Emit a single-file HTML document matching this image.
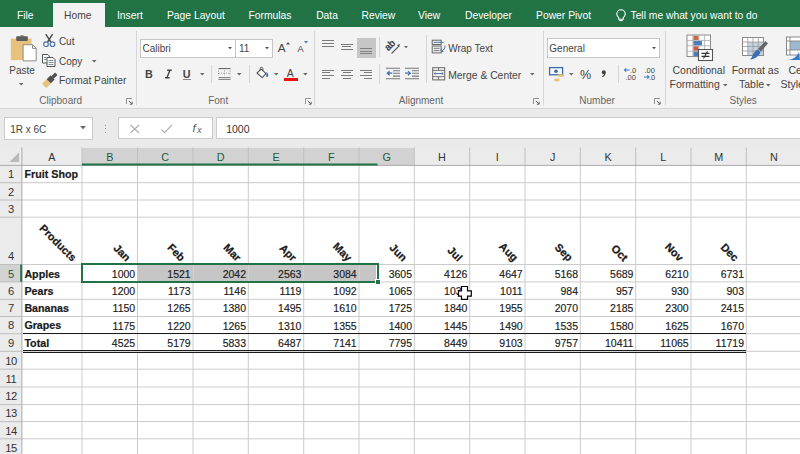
<!DOCTYPE html>
<html><head><meta charset="utf-8"><style>
html,body{margin:0;padding:0;}
body{width:800px;height:454px;overflow:hidden;position:relative;background:#fff;font-family:"Liberation Sans",sans-serif;}
.t{position:absolute;white-space:nowrap;}
.r{position:absolute;}
svg.r{overflow:visible;}
</style></head><body>
<div class="r" style="left:0px;top:0px;width:800px;height:27px;background:#217346;"></div>
<div class="r" style="left:53px;top:3px;width:51.5px;height:25px;background:#f3f3f3;"></div>
<div class="t" style="left:17.00px;top:10.58px;font-size:10.3px;line-height:10.3px;color:#ffffff;">File</div>
<div class="t" style="left:64.00px;top:10.58px;font-size:10.3px;line-height:10.3px;color:#444;">Home</div>
<div class="t" style="left:117.00px;top:10.58px;font-size:10.3px;line-height:10.3px;color:#ffffff;">Insert</div>
<div class="t" style="left:167.00px;top:10.58px;font-size:10.3px;line-height:10.3px;color:#ffffff;">Page Layout</div>
<div class="t" style="left:248.50px;top:10.58px;font-size:10.3px;line-height:10.3px;color:#ffffff;">Formulas</div>
<div class="t" style="left:316.20px;top:10.58px;font-size:10.3px;line-height:10.3px;color:#ffffff;">Data</div>
<div class="t" style="left:361.50px;top:10.58px;font-size:10.3px;line-height:10.3px;color:#ffffff;">Review</div>
<div class="t" style="left:418.10px;top:10.58px;font-size:10.3px;line-height:10.3px;color:#ffffff;">View</div>
<div class="t" style="left:465.00px;top:10.58px;font-size:10.3px;line-height:10.3px;color:#ffffff;">Developer</div>
<div class="t" style="left:536.10px;top:10.58px;font-size:10.3px;line-height:10.3px;color:#ffffff;">Power Pivot</div>
<div class="t" style="left:630.50px;top:10.58px;font-size:10.3px;line-height:10.3px;color:#ffffff;">Tell me what you want to do</div>
<svg class="r" style="left:614px;top:9px" width="14" height="14" viewBox="0 0 14 14"><path d="M4.7 8.6 C3.4 7.6 2.8 6.4 2.8 5 A4.2 4.2 0 0 1 11.2 5 C11.2 6.4 10.6 7.6 9.3 8.6 L9.3 10.2 L4.7 10.2 Z" fill="none" stroke="#fff" stroke-width="1.1"/><path d="M5.2 11.6 H8.8" stroke="#fff" stroke-width="1.1"/></svg>
<div class="r" style="left:0px;top:27px;width:800px;height:81px;background:#f3f3f3;"></div>
<div class="r" style="left:0px;top:108px;width:800px;height:1px;background:#d5d5d5;"></div>
<svg class="r" style="left:9px;top:33px" width="30" height="30" viewBox="0 0 30 30">
<rect x="1.8" y="5.6" width="20.8" height="21.5" fill="#e8c27c"/>
<rect x="7.2" y="3.3" width="11.6" height="4.6" rx="1" fill="#5d5d5d"/>
<path d="M10.5 3.5 Q13 1.2 15.5 3.5 Z" fill="#5d5d5d"/>
<path d="M14.1 11.7 H23.5 L27.2 15.4 V27.9 H14.1 Z" fill="#fff" stroke="#8a8a8a" stroke-width="1"/>
<path d="M23.5 11.7 V15.4 H27.2" fill="none" stroke="#8a8a8a" stroke-width="1"/>
</svg>
<div class="t" style="left:9.30px;top:65.83px;font-size:10.0px;line-height:10.0px;color:#444;">Paste</div>
<svg class="r" style="left:19.3px;top:83.3px" width="4.5" height="2.5"><path d="M0 0 H4.5 L2.25 2.5 Z" fill="#666"/></svg>
<svg class="r" style="left:42px;top:33px" width="15" height="15" viewBox="0 0 15 15">
<path d="M3.8 1.2 L8.8 9 M10.6 1.2 L5.6 9" stroke="#4a4a4a" stroke-width="1.4" fill="none"/>
<circle cx="4" cy="11.2" r="2.3" fill="none" stroke="#4f74a8" stroke-width="1.2"/>
<circle cx="10.5" cy="11.2" r="2.3" fill="none" stroke="#4f74a8" stroke-width="1.2"/>
</svg>
<div class="t" style="left:58.90px;top:36.83px;font-size:10.0px;line-height:10.0px;color:#444;">Cut</div>
<svg class="r" style="left:41px;top:53px" width="16" height="15" viewBox="0 0 16 15">
<path d="M1.5 1.5 H6.8 L8.3 3 V10 H1.5 Z" fill="#fafafa" stroke="#555" stroke-width="1"/>
<path d="M3 4.5 H5.5 M3 6.5 H5.5" stroke="#6a7f95" stroke-width="0.9"/>
<path d="M6 4.5 H12 L14 6.5 V13.5 H6 Z" fill="#fafafa" stroke="#555" stroke-width="1"/>
<path d="M7.6 7.5 H12.4 M7.6 9.5 H12.4 M7.6 11.5 H12.4" stroke="#6a7f95" stroke-width="0.9"/>
</svg>
<div class="t" style="left:59.00px;top:56.73px;font-size:10.0px;line-height:10.0px;color:#444;">Copy</div>
<svg class="r" style="left:91.8px;top:60px" width="4.5" height="2.5"><path d="M0 0 H4.5 L2.25 2.5 Z" fill="#666"/></svg>
<svg class="r" style="left:42px;top:72px" width="16" height="16" viewBox="0 0 16 16">
<path d="M4.32 15.92 L9.32 10.92 L5.08 6.68 L0.08 11.68 Z" fill="#e8c27c"/>
<path d="M8.85 11.25 L12.65 7.45 L8.55 3.35 L4.75 7.15 Z" fill="#4f4f4f"/>
<path d="M11.60 6.80 L15.50 2.90 L13.10 0.50 L9.20 4.40 Z" fill="#4f4f4f"/>
</svg>
<div class="t" style="left:59.00px;top:75.87px;font-size:10.2px;line-height:10.2px;color:#444;">Format Painter</div>
<div class="t" style="left:39.30px;top:96.33px;font-size:10.0px;line-height:10.0px;color:#666;">Clipboard</div>
<svg class="r" style="left:125.5px;top:98px" width="7" height="7" viewBox="0 0 7 7"><path d="M0.5 6 V0.5 H6" fill="none" stroke="#888" stroke-width="0.9"/><path d="M2.8 2.8 L6 6 M3.8 6.2 H6.2 V3.8" fill="none" stroke="#666" stroke-width="1"/></svg>
<div class="r" style="left:136px;top:31px;width:1px;height:74px;background:#d6d6d6;"></div>
<div class="r" style="left:140px;top:38.5px;width:96px;height:19px;background:#fff;box-sizing:border-box;border:1px solid #c6c6c6;"></div>
<div class="r" style="left:235px;top:38.5px;width:38px;height:19px;background:#fff;box-sizing:border-box;border:1px solid #c6c6c6;"></div>
<div class="t" style="left:142.50px;top:44.03px;font-size:10.0px;line-height:10.0px;color:#444;">Calibri</div>
<svg class="r" style="left:227.5px;top:46.8px" width="4" height="2.3"><path d="M0 0 H4 L2.0 2.3 Z" fill="#555"/></svg>
<div class="t" style="left:239.00px;top:44.03px;font-size:10.0px;line-height:10.0px;color:#444;">11</div>
<svg class="r" style="left:264.8px;top:46.8px" width="4" height="2.3"><path d="M0 0 H4 L2.0 2.3 Z" fill="#555"/></svg>
<div class="t" style="left:277.80px;top:42.71px;font-size:11.8px;line-height:11.8px;color:#444;">A</div>
<svg class="r" style="left:286.3px;top:41.5px" width="4" height="2.5"><path d="M0 2.5 H4 L2 0 Z" fill="#555"/></svg>
<div class="t" style="left:297.60px;top:44.91px;font-size:9.2px;line-height:9.2px;color:#444;">A</div>
<svg class="r" style="left:304.3px;top:40.8px" width="4" height="2.5"><path d="M0 0 H4 L2.0 2.5 Z" fill="#3a7bc8"/></svg>
<div class="t" style="left:145.00px;top:68.56px;font-size:10.8px;line-height:10.8px;color:#444;font-weight:bold;">B</div>
<svg class="r" style="left:164px;top:69px" width="9" height="10" viewBox="0 0 9 10"><path d="M3.2 1.2 H7.8 M1 8.7 H5.6 M5.9 1.2 L2.9 8.7" stroke="#444" stroke-width="1.4" fill="none"/></svg>
<div class="t" style="left:182.80px;top:68.56px;font-size:10.8px;line-height:10.8px;color:#444;font-weight:bold;">U</div>
<div class="r" style="left:183px;top:78.6px;width:8px;height:1.3px;background:#888;"></div>
<svg class="r" style="left:199.5px;top:73.2px" width="4.5" height="2.5"><path d="M0 0 H4.5 L2.25 2.5 Z" fill="#666"/></svg>
<div class="r" style="left:211px;top:65px;width:1px;height:18px;background:#d6d6d6;"></div>
<svg class="r" style="left:218px;top:67px" width="13" height="14" viewBox="0 0 13 14">
<rect x="0.5" y="1" width="12" height="1.1" fill="#666"/>
<path d="M0.5 3.5 V9 M6.5 3.5 V9 M12 3.5 V9" stroke="#888" stroke-width="1" stroke-dasharray="1 1.6" fill="none"/>
<path d="M0.5 6.2 H12.5" stroke="#999" stroke-width="0.9" stroke-dasharray="1.2 1.2" fill="none"/>
<rect x="0.5" y="10" width="12" height="1.1" fill="#888"/>
<rect x="0.5" y="11.9" width="12" height="1.1" fill="#888"/>
</svg>
<svg class="r" style="left:236.5px;top:73.2px" width="4.5" height="2.5"><path d="M0 0 H4.5 L2.25 2.5 Z" fill="#666"/></svg>
<div class="r" style="left:248.7px;top:65px;width:1px;height:18px;background:#d6d6d6;"></div>
<svg class="r" style="left:256px;top:66px" width="14" height="13" viewBox="0 0 14 13">
<path d="M1 7 L5.2 3.2 L10 7.6 L6.2 11.6 Z" fill="#fff" stroke="#555" stroke-width="1.1" stroke-linejoin="round"/>
<path d="M4.2 4.2 C3.6 1.6 5 0.8 6.2 1.4 C7.2 2 7.2 3.4 6.6 5" fill="none" stroke="#555" stroke-width="1"/>
<path d="M10.4 5.8 C11.8 7.2 12.8 9 12 10.6 C11.3 11.6 10 11 10.2 9.8 C10.3 8.6 10.6 7.2 10.4 5.8 Z" fill="#3a6fb0"/>
</svg>
<svg class="r" style="left:273.8px;top:73.2px" width="4.5" height="2.5"><path d="M0 0 H4.5 L2.25 2.5 Z" fill="#666"/></svg>
<div class="t" style="left:286.80px;top:67.81px;font-size:10.5px;line-height:10.5px;color:#444;">A</div>
<div class="r" style="left:283.8px;top:78px;width:14.2px;height:2.9px;background:#e81010;"></div>
<svg class="r" style="left:302.8px;top:73.2px" width="4.5" height="2.5"><path d="M0 0 H4.5 L2.25 2.5 Z" fill="#666"/></svg>
<div class="t" style="left:208.20px;top:96.33px;font-size:10.0px;line-height:10.0px;color:#666;">Font</div>
<svg class="r" style="left:304.5px;top:98px" width="7" height="7" viewBox="0 0 7 7"><path d="M0.5 6 V0.5 H6" fill="none" stroke="#888" stroke-width="0.9"/><path d="M2.8 2.8 L6 6 M3.8 6.2 H6.2 V3.8" fill="none" stroke="#666" stroke-width="1"/></svg>
<div class="r" style="left:314px;top:31px;width:1px;height:74px;background:#d6d6d6;"></div>
<div class="r" style="left:322.2px;top:40.15px;width:12.2px;height:1.1px;background:#7a7a7a;"></div>
<div class="r" style="left:322.2px;top:43.05px;width:12.2px;height:1.1px;background:#7a7a7a;"></div>
<div class="r" style="left:322.2px;top:45.95px;width:12.2px;height:1.1px;background:#7a7a7a;"></div>
<div class="r" style="left:340.8px;top:43.75px;width:12.2px;height:1.1px;background:#7a7a7a;"></div>
<div class="r" style="left:342.3px;top:46.35px;width:9.2px;height:1.1px;background:#7a7a7a;"></div>
<div class="r" style="left:340.8px;top:49.05px;width:12.2px;height:1.1px;background:#7a7a7a;"></div>
<div class="r" style="left:357px;top:38px;width:19px;height:19.5px;background:#c6c6c6;"></div>
<div class="r" style="left:360px;top:47.75px;width:12px;height:1.1px;background:#808080;"></div>
<div class="r" style="left:360px;top:50.65px;width:12px;height:1.1px;background:#808080;"></div>
<div class="r" style="left:360px;top:53.35px;width:12px;height:1.1px;background:#808080;"></div>
<div class="r" style="left:379px;top:37px;width:1px;height:20px;background:#d6d6d6;"></div>
<svg class="r" style="left:385px;top:40px" width="17" height="15" viewBox="0 0 17 15">
<text x="0" y="0" transform="translate(3.2,11.2) rotate(-45)" font-family="Liberation Sans" font-size="9.5" fill="#333" stroke="#333" stroke-width="0.35">ab</text>
<path d="M6.5 13.5 L14.2 5.8" stroke="#555" stroke-width="1.1"/>
<path d="M12 5 L15 4 L14 7 Z" fill="#555"/>
</svg>
<svg class="r" style="left:403.5px;top:46.2px" width="4" height="2.3"><path d="M0 0 H4 L2.0 2.3 Z" fill="#666"/></svg>
<div class="r" style="left:322px;top:69.55px;width:12px;height:1.1px;background:#7a7a7a;"></div>
<div class="r" style="left:322px;top:72.15px;width:8px;height:1.1px;background:#7a7a7a;"></div>
<div class="r" style="left:322px;top:75.05px;width:12px;height:1.1px;background:#7a7a7a;"></div>
<div class="r" style="left:322px;top:77.75px;width:8px;height:1.1px;background:#7a7a7a;"></div>
<div class="r" style="left:341px;top:69.55px;width:12px;height:1.1px;background:#7a7a7a;"></div>
<div class="r" style="left:343px;top:72.15px;width:8px;height:1.1px;background:#7a7a7a;"></div>
<div class="r" style="left:341px;top:75.05px;width:12px;height:1.1px;background:#7a7a7a;"></div>
<div class="r" style="left:343px;top:77.75px;width:8px;height:1.1px;background:#7a7a7a;"></div>
<div class="r" style="left:360px;top:69.55px;width:12px;height:1.1px;background:#7a7a7a;"></div>
<div class="r" style="left:364px;top:72.15px;width:8px;height:1.1px;background:#7a7a7a;"></div>
<div class="r" style="left:360px;top:75.05px;width:12px;height:1.1px;background:#7a7a7a;"></div>
<div class="r" style="left:364px;top:77.75px;width:8px;height:1.1px;background:#7a7a7a;"></div>
<div class="r" style="left:379px;top:64px;width:1px;height:20px;background:#d6d6d6;"></div>
<svg class="r" style="left:386px;top:67px" width="34" height="14" viewBox="0 0 34 14">
<path d="M0 1.2 H14 M7 3.8 H14 M7 6.2 H14 M7 9.1 H14 M0 11.8 H14" stroke="#777" stroke-width="1.1"/>
<path d="M0.3 6.2 L3.6 3.4 V9 Z M3 5.6 H6.3 V6.8 H3 Z" fill="#3a6fb0"/>
<path d="M19 1.2 H33 M26 3.8 H33 M26 6.2 H33 M26 9.1 H33 M19 11.8 H33" stroke="#777" stroke-width="1.1"/>
<path d="M25.2 6.2 L21.9 3.4 V9 Z M19 5.6 H22.5 V6.8 H19 Z" fill="#3a6fb0"/>
</svg>
<div class="r" style="left:425.9px;top:35px;width:1px;height:48px;background:#d6d6d6;"></div>
<svg class="r" style="left:431px;top:39px" width="16" height="16" viewBox="0 0 16 16">
<rect x="1.2" y="1.2" width="9" height="4.3" fill="none" stroke="#666" stroke-width="1"/>
<path d="M2.5 3.35 H12.5" stroke="#4f74a8" stroke-width="1"/>
<rect x="1.2" y="7" width="9" height="6.9" fill="none" stroke="#666" stroke-width="1"/>
<path d="M2.8 9.3 H8.5 M2.8 11.6 H8.5" stroke="#666" stroke-width="0.9"/>
<path d="M14 6.5 C14 9.5 13 11 10.5 12" fill="none" stroke="#4f74a8" stroke-width="1"/>
<path d="M10 9.8 L10 12.3 L12.5 12.6" fill="none" stroke="#4f74a8" stroke-width="1"/>
</svg>
<div class="t" style="left:448.20px;top:44.23px;font-size:10.0px;line-height:10.0px;color:#444;">Wrap Text</div>
<svg class="r" style="left:431px;top:66px" width="15" height="15" viewBox="0 0 15 15">
<rect x="1.7" y="1.7" width="12" height="12.2" fill="none" stroke="#666" stroke-width="1"/>
<path d="M1.7 4.4 H13.7 M1.7 10.7 H13.7 M7.6 1.7 V4.4 M7.6 10.7 V13.9" stroke="#666" stroke-width="0.9"/>
<path d="M3.3 7.55 H12.1" stroke="#4f74a8" stroke-width="1"/>
<path d="M4.6 6.3 L3.2 7.55 L4.6 8.8 M10.8 6.3 L12.2 7.55 L10.8 8.8" fill="none" stroke="#4f74a8" stroke-width="0.9"/>
</svg>
<div class="t" style="left:448.20px;top:70.84px;font-size:10.35px;line-height:10.35px;color:#444;">Merge &amp; Center</div>
<svg class="r" style="left:530.3px;top:73.2px" width="4.5" height="2.5"><path d="M0 0 H4.5 L2.25 2.5 Z" fill="#666"/></svg>
<div class="t" style="left:398.80px;top:96.33px;font-size:10.0px;line-height:10.0px;color:#666;">Alignment</div>
<svg class="r" style="left:532.5px;top:98px" width="7" height="7" viewBox="0 0 7 7"><path d="M0.5 6 V0.5 H6" fill="none" stroke="#888" stroke-width="0.9"/><path d="M2.8 2.8 L6 6 M3.8 6.2 H6.2 V3.8" fill="none" stroke="#666" stroke-width="1"/></svg>
<div class="r" style="left:542.6px;top:31px;width:1px;height:74px;background:#d6d6d6;"></div>
<div class="r" style="left:547.4px;top:38px;width:112.4px;height:19.6px;background:#fff;box-sizing:border-box;border:1px solid #c6c6c6;"></div>
<div class="t" style="left:549.30px;top:43.73px;font-size:10.0px;line-height:10.0px;color:#444;">General</div>
<svg class="r" style="left:651.7px;top:47px" width="4" height="2.3"><path d="M0 0 H4 L2.0 2.3 Z" fill="#555"/></svg>
<svg class="r" style="left:548px;top:66px" width="17" height="16" viewBox="0 0 17 16">
<rect x="1.6" y="1.6" width="13" height="7.2" fill="#f4f8fc" stroke="#3d69a8" stroke-width="1.3"/>
<circle cx="8" cy="5.2" r="1.8" fill="#3d69a8"/>
<ellipse cx="12.8" cy="9.6" rx="3.6" ry="1.3" fill="#e8c27c"/>
<ellipse cx="8.8" cy="14" rx="3" ry="1.4" fill="#e8c27c"/>
</svg>
<svg class="r" style="left:568.5px;top:73.2px" width="4.5" height="2.5"><path d="M0 0 H4.5 L2.25 2.5 Z" fill="#666"/></svg>
<div class="t" style="left:580.00px;top:68.63px;font-size:12.6px;line-height:12.6px;color:#444;">%</div>
<svg class="r" style="left:600px;top:69px" width="8" height="9" viewBox="0 0 8 9"><circle cx="3.8" cy="3.2" r="2" fill="#444"/><path d="M5.6 3.4 C5.6 5.6 4.4 7.4 2.4 8.2 L2 7.4 C3.3 6.6 4 5.6 4 4.2 Z" fill="#444"/></svg>
<div class="r" style="left:618.3px;top:65px;width:1px;height:18px;background:#d6d6d6;"></div>
<svg class="r" style="left:623px;top:66px" width="36" height="16" viewBox="0 0 36 16">
<text x="7" y="6.8" font-family="Liberation Sans" font-size="7.5" fill="#444">.0</text>
<text x="2.5" y="13.8" font-family="Liberation Sans" font-size="7.5" fill="#444">.00</text>
<path d="M1.5 4 H6.5 M3.2 2.3 L1.5 4 L3.2 5.7" fill="none" stroke="#3a7bc8" stroke-width="1.1"/>
<text x="21.5" y="6.8" font-family="Liberation Sans" font-size="7.5" fill="#444">.00</text>
<text x="26" y="13.8" font-family="Liberation Sans" font-size="7.5" fill="#444">.0</text>
<path d="M21 11 H26 M24.3 9.3 L26 11 L24.3 12.7" fill="none" stroke="#3a7bc8" stroke-width="1.1"/>
</svg>
<div class="t" style="left:579.30px;top:96.33px;font-size:10.0px;line-height:10.0px;color:#666;">Number</div>
<svg class="r" style="left:653.8px;top:98px" width="7" height="7" viewBox="0 0 7 7"><path d="M0.5 6 V0.5 H6" fill="none" stroke="#888" stroke-width="0.9"/><path d="M2.8 2.8 L6 6 M3.8 6.2 H6.2 V3.8" fill="none" stroke="#666" stroke-width="1"/></svg>
<div class="r" style="left:665.4px;top:31px;width:1px;height:74px;background:#d6d6d6;"></div>
<svg class="r" style="left:686px;top:34px" width="28" height="28" viewBox="0 0 28 28">
<rect x="1" y="1" width="23.5" height="21.5" fill="#fff" stroke="#8a8a8a" stroke-width="1"/>
<path d="M1 6.4 H24.5 M1 11.8 H24.5 M1 17.2 H24.5 M6.9 1 V22.5 M12.8 1 V22.5 M18.7 1 V22.5" stroke="#b0b0b0" stroke-width="0.9"/>
<rect x="7.4" y="1.8" width="5" height="4.2" fill="#c86a4a"/>
<rect x="7.4" y="7" width="8.5" height="4.3" fill="#4a7ebb"/>
<rect x="7.4" y="12.3" width="5" height="4.4" fill="#d0573e"/>
<rect x="7.4" y="17.6" width="5" height="4.4" fill="#4a7ebb"/>
<rect x="12.5" y="15.5" width="14" height="11" fill="#fff" stroke="#555" stroke-width="1.1"/>
<path d="M15.5 19.4 H23.5 M15.5 22.4 H23.5 M21.5 17.3 L17.5 24.5" stroke="#333" stroke-width="1.1" fill="none"/>
</svg>
<div class="t" style="left:672.50px;top:65.21px;font-size:10.5px;line-height:10.5px;color:#444;">Conditional</div>
<div class="t" style="left:669.60px;top:79.41px;font-size:10.5px;line-height:10.5px;color:#444;">Formatting</div>
<svg class="r" style="left:722.8px;top:83.5px" width="4.5" height="2.5"><path d="M0 0 H4.5 L2.25 2.5 Z" fill="#666"/></svg>
<svg class="r" style="left:742px;top:36px" width="28" height="26" viewBox="0 0 28 26">
<rect x="0.5" y="1.5" width="21" height="18" fill="#fff" stroke="#8a8a8a" stroke-width="1"/>
<rect x="6" y="6" width="15" height="13" fill="#c5d3e0"/>
<path d="M0.5 6 H21.5 M0.5 10.5 H21.5 M0.5 15 H21.5 M5.8 1.5 V19.5 M11 1.5 V19.5 M16.3 1.5 V19.5" stroke="#9a9a9a" stroke-width="0.8"/>
<path d="M23.5 5 L26 7.5 L19 15.5 L16 13 Z" fill="#666"/>
<path d="M15.5 13.5 L18.5 16 C17.5 20 13 23 8 23.5 L10 21 C11 18 12.5 15 15.5 13.5 Z" fill="#3a6fb0"/>
</svg>
<div class="t" style="left:731.70px;top:65.21px;font-size:10.5px;line-height:10.5px;color:#444;">Format as</div>
<div class="t" style="left:739.00px;top:79.41px;font-size:10.5px;line-height:10.5px;color:#444;">Table</div>
<svg class="r" style="left:765.6px;top:83.5px" width="4.5" height="2.5"><path d="M0 0 H4.5 L2.25 2.5 Z" fill="#666"/></svg>
<svg class="r" style="left:786px;top:36px" width="20" height="26" viewBox="0 0 20 26">
<rect x="0.5" y="1" width="20" height="18" fill="#fff" stroke="#888" stroke-width="1"/>
<rect x="4" y="5" width="16" height="9" fill="#9fb7d0"/>
<path d="M0.5 5 H20 M0.5 14 H20 M4 1 V19" stroke="#888" stroke-width="0.9"/>
<path d="M13 16 C11 21 6 24 1 24 L14 24 Z" fill="#3a7bc8"/>
</svg>
<div class="t" style="left:788.50px;top:65.21px;font-size:10.5px;line-height:10.5px;color:#444;">Ce</div>
<div class="t" style="left:780.60px;top:79.41px;font-size:10.5px;line-height:10.5px;color:#444;">Style</div>
<div class="t" style="left:729.50px;top:96.33px;font-size:10.0px;line-height:10.0px;color:#666;">Styles</div>
<div class="r" style="left:0px;top:109px;width:800px;height:39px;background:#eaeaea;"></div>
<div class="r" style="left:4px;top:117px;width:88.5px;height:22.5px;background:#fff;box-sizing:border-box;border:1px solid #cdcdcd;"></div>
<div class="t" style="left:10.20px;top:124.94px;font-size:10.0px;line-height:10.0px;color:#444;">1R x 6C</div>
<svg class="r" style="left:80px;top:125.8px" width="6" height="3.2"><path d="M0 0 H6 L3.0 3.2 Z" fill="#666"/></svg>
<div class="r" style="left:105px;top:124.5px;width:1.2px;height:1.2px;background:#999;"></div>
<div class="r" style="left:105px;top:128px;width:1.2px;height:1.2px;background:#999;"></div>
<div class="r" style="left:105px;top:131.5px;width:1.2px;height:1.2px;background:#999;"></div>
<div class="r" style="left:118.4px;top:117px;width:94.3px;height:22.2px;background:#fff;box-sizing:border-box;border:1px solid #cdcdcd;"></div>
<svg class="r" style="left:129px;top:124px" width="45" height="10" viewBox="0 0 45 10">
<path d="M1.5 1 L10 9 M10 1 L1.5 9" stroke="#b0b0b0" stroke-width="1.1"/>
<path d="M32.5 5.5 L35.5 8.6 L43 1" fill="none" stroke="#b0b0b0" stroke-width="1.2"/>
</svg>
<div class="t" style="left:192.50px;top:122.87px;font-size:11.5px;line-height:11.5px;color:#555;font-family:"Liberation Serif";"><i>f</i></div>
<div class="t" style="left:197.20px;top:126.20px;font-size:8.5px;line-height:8.5px;color:#555;font-family:"Liberation Serif";"><i>x</i></div>
<div class="r" style="left:216.4px;top:117px;width:600px;height:22.2px;background:#fff;box-sizing:border-box;border:1px solid #cdcdcd;"></div>
<div class="t" style="left:226.20px;top:123.81px;font-size:10.5px;line-height:10.5px;color:#333;">1000</div>
<div class="r" style="left:0px;top:147.5px;width:800px;height:17.900000000000006px;background:#ebebeb;"></div>
<div class="r" style="left:0px;top:165.4px;width:21.9px;height:288.6px;background:#ebebeb;"></div>
<div class="r" style="left:82px;top:147.5px;width:332.3px;height:17.900000000000006px;background:#d2d2d2;"></div>
<div class="r" style="left:0px;top:264.5px;width:21.9px;height:17.399999999999977px;background:#d2d2d2;"></div>
<svg class="r" style="left:9px;top:151.5px" width="11" height="11"><path d="M10 0.5 V10 H0.5 Z" fill="#b9b9b9"/></svg>
<svg class="r" style="left:0;top:0" width="800" height="454"><line x1="82" y1="165.4" x2="82" y2="454" stroke="#cbcbcb" stroke-width="1"/><line x1="137.5" y1="165.4" x2="137.5" y2="454" stroke="#cbcbcb" stroke-width="1"/><line x1="193" y1="165.4" x2="193" y2="454" stroke="#cbcbcb" stroke-width="1"/><line x1="248.3" y1="165.4" x2="248.3" y2="454" stroke="#cbcbcb" stroke-width="1"/><line x1="303.7" y1="165.4" x2="303.7" y2="454" stroke="#cbcbcb" stroke-width="1"/><line x1="359" y1="165.4" x2="359" y2="454" stroke="#cbcbcb" stroke-width="1"/><line x1="414.3" y1="165.4" x2="414.3" y2="454" stroke="#cbcbcb" stroke-width="1"/><line x1="469.7" y1="165.4" x2="469.7" y2="454" stroke="#cbcbcb" stroke-width="1"/><line x1="525" y1="165.4" x2="525" y2="454" stroke="#cbcbcb" stroke-width="1"/><line x1="580.3" y1="165.4" x2="580.3" y2="454" stroke="#cbcbcb" stroke-width="1"/><line x1="635.7" y1="165.4" x2="635.7" y2="454" stroke="#cbcbcb" stroke-width="1"/><line x1="691" y1="165.4" x2="691" y2="454" stroke="#cbcbcb" stroke-width="1"/><line x1="746.3" y1="165.4" x2="746.3" y2="454" stroke="#cbcbcb" stroke-width="1"/><line x1="801.6" y1="165.4" x2="801.6" y2="454" stroke="#cbcbcb" stroke-width="1"/><line x1="21.9" y1="182.7" x2="800" y2="182.7" stroke="#cbcbcb" stroke-width="1"/><line x1="21.9" y1="200" x2="800" y2="200" stroke="#cbcbcb" stroke-width="1"/><line x1="21.9" y1="217.2" x2="800" y2="217.2" stroke="#cbcbcb" stroke-width="1"/><line x1="21.9" y1="264.5" x2="800" y2="264.5" stroke="#cbcbcb" stroke-width="1"/><line x1="21.9" y1="281.9" x2="800" y2="281.9" stroke="#cbcbcb" stroke-width="1"/><line x1="21.9" y1="299.3" x2="800" y2="299.3" stroke="#cbcbcb" stroke-width="1"/><line x1="21.9" y1="316.5" x2="800" y2="316.5" stroke="#cbcbcb" stroke-width="1"/><line x1="21.9" y1="333.7" x2="800" y2="333.7" stroke="#cbcbcb" stroke-width="1"/><line x1="21.9" y1="351.3" x2="800" y2="351.3" stroke="#cbcbcb" stroke-width="1"/><line x1="21.9" y1="369.2" x2="800" y2="369.2" stroke="#cbcbcb" stroke-width="1"/><line x1="21.9" y1="387.0" x2="800" y2="387.0" stroke="#cbcbcb" stroke-width="1"/><line x1="21.9" y1="404.6" x2="800" y2="404.6" stroke="#cbcbcb" stroke-width="1"/><line x1="21.9" y1="421.6" x2="800" y2="421.6" stroke="#cbcbcb" stroke-width="1"/><line x1="21.9" y1="438.8" x2="800" y2="438.8" stroke="#cbcbcb" stroke-width="1"/><line x1="21.9" y1="456.2" x2="800" y2="456.2" stroke="#cbcbcb" stroke-width="1"/><line x1="82" y1="147.5" x2="82" y2="165.4" stroke="#bfbfbf" stroke-width="1"/><line x1="137.5" y1="147.5" x2="137.5" y2="165.4" stroke="#bfbfbf" stroke-width="1"/><line x1="193" y1="147.5" x2="193" y2="165.4" stroke="#bfbfbf" stroke-width="1"/><line x1="248.3" y1="147.5" x2="248.3" y2="165.4" stroke="#bfbfbf" stroke-width="1"/><line x1="303.7" y1="147.5" x2="303.7" y2="165.4" stroke="#bfbfbf" stroke-width="1"/><line x1="359" y1="147.5" x2="359" y2="165.4" stroke="#bfbfbf" stroke-width="1"/><line x1="414.3" y1="147.5" x2="414.3" y2="165.4" stroke="#bfbfbf" stroke-width="1"/><line x1="469.7" y1="147.5" x2="469.7" y2="165.4" stroke="#bfbfbf" stroke-width="1"/><line x1="525" y1="147.5" x2="525" y2="165.4" stroke="#bfbfbf" stroke-width="1"/><line x1="580.3" y1="147.5" x2="580.3" y2="165.4" stroke="#bfbfbf" stroke-width="1"/><line x1="635.7" y1="147.5" x2="635.7" y2="165.4" stroke="#bfbfbf" stroke-width="1"/><line x1="691" y1="147.5" x2="691" y2="165.4" stroke="#bfbfbf" stroke-width="1"/><line x1="746.3" y1="147.5" x2="746.3" y2="165.4" stroke="#bfbfbf" stroke-width="1"/><line x1="801.6" y1="147.5" x2="801.6" y2="165.4" stroke="#bfbfbf" stroke-width="1"/><line x1="0" y1="182.7" x2="21.9" y2="182.7" stroke="#bfbfbf" stroke-width="1"/><line x1="0" y1="200" x2="21.9" y2="200" stroke="#bfbfbf" stroke-width="1"/><line x1="0" y1="217.2" x2="21.9" y2="217.2" stroke="#bfbfbf" stroke-width="1"/><line x1="0" y1="264.5" x2="21.9" y2="264.5" stroke="#bfbfbf" stroke-width="1"/><line x1="0" y1="281.9" x2="21.9" y2="281.9" stroke="#bfbfbf" stroke-width="1"/><line x1="0" y1="299.3" x2="21.9" y2="299.3" stroke="#bfbfbf" stroke-width="1"/><line x1="0" y1="316.5" x2="21.9" y2="316.5" stroke="#bfbfbf" stroke-width="1"/><line x1="0" y1="333.7" x2="21.9" y2="333.7" stroke="#bfbfbf" stroke-width="1"/><line x1="0" y1="351.3" x2="21.9" y2="351.3" stroke="#bfbfbf" stroke-width="1"/><line x1="0" y1="369.2" x2="21.9" y2="369.2" stroke="#bfbfbf" stroke-width="1"/><line x1="0" y1="387.0" x2="21.9" y2="387.0" stroke="#bfbfbf" stroke-width="1"/><line x1="0" y1="404.6" x2="21.9" y2="404.6" stroke="#bfbfbf" stroke-width="1"/><line x1="0" y1="421.6" x2="21.9" y2="421.6" stroke="#bfbfbf" stroke-width="1"/><line x1="0" y1="438.8" x2="21.9" y2="438.8" stroke="#bfbfbf" stroke-width="1"/><line x1="0" y1="456.2" x2="21.9" y2="456.2" stroke="#bfbfbf" stroke-width="1"/><line x1="0" y1="165.4" x2="800" y2="165.4" stroke="#ababab" stroke-width="1"/><line x1="21.9" y1="147.5" x2="21.9" y2="454" stroke="#ababab" stroke-width="1"/><line x1="82" y1="164.6" x2="377.5" y2="164.6" stroke="#217346" stroke-width="2"/><line x1="21.2" y1="264.5" x2="21.2" y2="281.9" stroke="#217346" stroke-width="2"/></svg>
<div class="t" style="left:1.95px;width:100px;text-align:center;top:151.56px;font-size:10.8px;line-height:10.8px;color:#333;">A</div>
<div class="t" style="left:59.75px;width:100px;text-align:center;top:151.56px;font-size:10.8px;line-height:10.8px;color:#215c3a;">B</div>
<div class="t" style="left:115.25px;width:100px;text-align:center;top:151.56px;font-size:10.8px;line-height:10.8px;color:#215c3a;">C</div>
<div class="t" style="left:170.65px;width:100px;text-align:center;top:151.56px;font-size:10.8px;line-height:10.8px;color:#215c3a;">D</div>
<div class="t" style="left:226.00px;width:100px;text-align:center;top:151.56px;font-size:10.8px;line-height:10.8px;color:#215c3a;">E</div>
<div class="t" style="left:281.35px;width:100px;text-align:center;top:151.56px;font-size:10.8px;line-height:10.8px;color:#215c3a;">F</div>
<div class="t" style="left:336.65px;width:100px;text-align:center;top:151.56px;font-size:10.8px;line-height:10.8px;color:#215c3a;">G</div>
<div class="t" style="left:392.00px;width:100px;text-align:center;top:151.56px;font-size:10.8px;line-height:10.8px;color:#333;">H</div>
<div class="t" style="left:447.35px;width:100px;text-align:center;top:151.56px;font-size:10.8px;line-height:10.8px;color:#333;">I</div>
<div class="t" style="left:502.65px;width:100px;text-align:center;top:151.56px;font-size:10.8px;line-height:10.8px;color:#333;">J</div>
<div class="t" style="left:558.00px;width:100px;text-align:center;top:151.56px;font-size:10.8px;line-height:10.8px;color:#333;">K</div>
<div class="t" style="left:613.35px;width:100px;text-align:center;top:151.56px;font-size:10.8px;line-height:10.8px;color:#333;">L</div>
<div class="t" style="left:668.65px;width:100px;text-align:center;top:151.56px;font-size:10.8px;line-height:10.8px;color:#333;">M</div>
<div class="t" style="left:723.95px;width:100px;text-align:center;top:151.56px;font-size:10.8px;line-height:10.8px;color:#333;">N</div>
<div class="t" style="left:-39.00px;width:100px;text-align:center;top:169.42px;font-size:11.2px;line-height:11.2px;color:#333;;letter-spacing:-0.4px">1</div>
<div class="t" style="left:-39.00px;width:100px;text-align:center;top:186.72px;font-size:11.2px;line-height:11.2px;color:#333;;letter-spacing:-0.4px">2</div>
<div class="t" style="left:-39.00px;width:100px;text-align:center;top:203.92px;font-size:11.2px;line-height:11.2px;color:#333;;letter-spacing:-0.4px">3</div>
<div class="t" style="left:-39.00px;width:100px;text-align:center;top:251.22px;font-size:11.2px;line-height:11.2px;color:#333;;letter-spacing:-0.4px">4</div>
<div class="t" style="left:-39.00px;width:100px;text-align:center;top:268.62px;font-size:11.2px;line-height:11.2px;color:#215c3a;;letter-spacing:-0.4px">5</div>
<div class="t" style="left:-39.00px;width:100px;text-align:center;top:286.02px;font-size:11.2px;line-height:11.2px;color:#333;;letter-spacing:-0.4px">6</div>
<div class="t" style="left:-39.00px;width:100px;text-align:center;top:303.22px;font-size:11.2px;line-height:11.2px;color:#333;;letter-spacing:-0.4px">7</div>
<div class="t" style="left:-39.00px;width:100px;text-align:center;top:320.42px;font-size:11.2px;line-height:11.2px;color:#333;;letter-spacing:-0.4px">8</div>
<div class="t" style="left:-39.00px;width:100px;text-align:center;top:338.02px;font-size:11.2px;line-height:11.2px;color:#333;;letter-spacing:-0.4px">9</div>
<div class="t" style="left:-39.00px;width:100px;text-align:center;top:355.92px;font-size:11.2px;line-height:11.2px;color:#333;;letter-spacing:-0.4px">10</div>
<div class="t" style="left:-39.00px;width:100px;text-align:center;top:373.72px;font-size:11.2px;line-height:11.2px;color:#333;;letter-spacing:-0.4px">11</div>
<div class="t" style="left:-39.00px;width:100px;text-align:center;top:391.32px;font-size:11.2px;line-height:11.2px;color:#333;;letter-spacing:-0.4px">12</div>
<div class="t" style="left:-39.00px;width:100px;text-align:center;top:408.32px;font-size:11.2px;line-height:11.2px;color:#333;;letter-spacing:-0.4px">13</div>
<div class="t" style="left:-39.00px;width:100px;text-align:center;top:425.52px;font-size:11.2px;line-height:11.2px;color:#333;;letter-spacing:-0.4px">14</div>
<div class="t" style="left:-39.00px;width:100px;text-align:center;top:442.92px;font-size:11.2px;line-height:11.2px;color:#333;;letter-spacing:-0.4px">15</div>
<div class="r" style="left:137.5px;top:264.8px;width:238.5px;height:16.399999999999977px;background:#c6c6c6;"></div>
<div class="r" style="left:192.5px;top:265px;width:1px;height:16px;background:#d0d0d0;"></div>
<div class="r" style="left:247.8px;top:265px;width:1px;height:16px;background:#d0d0d0;"></div>
<div class="r" style="left:303.2px;top:265px;width:1px;height:16px;background:#d0d0d0;"></div>
<div class="r" style="left:358.5px;top:265px;width:1px;height:16px;background:#d0d0d0;"></div>
<div class="t" style="left:24.60px;top:169.04px;font-size:10.7px;line-height:10.7px;color:#1a1a1a;font-weight:bold;-webkit-text-stroke:0.2px #1a1a1a;">Fruit Shop</div>
<div class="t" style="left:24.40px;top:268.64px;font-size:10.7px;line-height:10.7px;color:#1a1a1a;font-weight:bold;-webkit-text-stroke:0.2px #1a1a1a;">Apples</div>
<div class="t" style="right:664.80px;top:268.81px;font-size:10.5px;line-height:10.5px;color:#1a1a1a;;-webkit-text-stroke:0.15px #1a1a1a">1000</div>
<div class="t" style="right:609.30px;top:268.81px;font-size:10.5px;line-height:10.5px;color:#1a1a1a;;-webkit-text-stroke:0.15px #1a1a1a">1521</div>
<div class="t" style="right:554.00px;top:268.81px;font-size:10.5px;line-height:10.5px;color:#1a1a1a;;-webkit-text-stroke:0.15px #1a1a1a">2042</div>
<div class="t" style="right:498.60px;top:268.81px;font-size:10.5px;line-height:10.5px;color:#1a1a1a;;-webkit-text-stroke:0.15px #1a1a1a">2563</div>
<div class="t" style="right:443.30px;top:268.81px;font-size:10.5px;line-height:10.5px;color:#1a1a1a;;-webkit-text-stroke:0.15px #1a1a1a">3084</div>
<div class="t" style="right:388.00px;top:268.81px;font-size:10.5px;line-height:10.5px;color:#1a1a1a;;-webkit-text-stroke:0.15px #1a1a1a">3605</div>
<div class="t" style="right:332.60px;top:268.81px;font-size:10.5px;line-height:10.5px;color:#1a1a1a;;-webkit-text-stroke:0.15px #1a1a1a">4126</div>
<div class="t" style="right:277.30px;top:268.81px;font-size:10.5px;line-height:10.5px;color:#1a1a1a;;-webkit-text-stroke:0.15px #1a1a1a">4647</div>
<div class="t" style="right:222.00px;top:268.81px;font-size:10.5px;line-height:10.5px;color:#1a1a1a;;-webkit-text-stroke:0.15px #1a1a1a">5168</div>
<div class="t" style="right:166.60px;top:268.81px;font-size:10.5px;line-height:10.5px;color:#1a1a1a;;-webkit-text-stroke:0.15px #1a1a1a">5689</div>
<div class="t" style="right:111.30px;top:268.81px;font-size:10.5px;line-height:10.5px;color:#1a1a1a;;-webkit-text-stroke:0.15px #1a1a1a">6210</div>
<div class="t" style="right:56.00px;top:268.81px;font-size:10.5px;line-height:10.5px;color:#1a1a1a;;-webkit-text-stroke:0.15px #1a1a1a">6731</div>
<div class="t" style="left:24.40px;top:286.04px;font-size:10.7px;line-height:10.7px;color:#1a1a1a;font-weight:bold;-webkit-text-stroke:0.2px #1a1a1a;">Pears</div>
<div class="t" style="right:664.80px;top:286.21px;font-size:10.5px;line-height:10.5px;color:#1a1a1a;;-webkit-text-stroke:0.15px #1a1a1a">1200</div>
<div class="t" style="right:609.30px;top:286.21px;font-size:10.5px;line-height:10.5px;color:#1a1a1a;;-webkit-text-stroke:0.15px #1a1a1a">1173</div>
<div class="t" style="right:554.00px;top:286.21px;font-size:10.5px;line-height:10.5px;color:#1a1a1a;;-webkit-text-stroke:0.15px #1a1a1a">1146</div>
<div class="t" style="right:498.60px;top:286.21px;font-size:10.5px;line-height:10.5px;color:#1a1a1a;;-webkit-text-stroke:0.15px #1a1a1a">1119</div>
<div class="t" style="right:443.30px;top:286.21px;font-size:10.5px;line-height:10.5px;color:#1a1a1a;;-webkit-text-stroke:0.15px #1a1a1a">1092</div>
<div class="t" style="right:388.00px;top:286.21px;font-size:10.5px;line-height:10.5px;color:#1a1a1a;;-webkit-text-stroke:0.15px #1a1a1a">1065</div>
<div class="t" style="right:332.60px;top:286.21px;font-size:10.5px;line-height:10.5px;color:#1a1a1a;;-webkit-text-stroke:0.15px #1a1a1a">1038</div>
<div class="t" style="right:277.30px;top:286.21px;font-size:10.5px;line-height:10.5px;color:#1a1a1a;;-webkit-text-stroke:0.15px #1a1a1a">1011</div>
<div class="t" style="right:222.00px;top:286.21px;font-size:10.5px;line-height:10.5px;color:#1a1a1a;;-webkit-text-stroke:0.15px #1a1a1a">984</div>
<div class="t" style="right:166.60px;top:286.21px;font-size:10.5px;line-height:10.5px;color:#1a1a1a;;-webkit-text-stroke:0.15px #1a1a1a">957</div>
<div class="t" style="right:111.30px;top:286.21px;font-size:10.5px;line-height:10.5px;color:#1a1a1a;;-webkit-text-stroke:0.15px #1a1a1a">930</div>
<div class="t" style="right:56.00px;top:286.21px;font-size:10.5px;line-height:10.5px;color:#1a1a1a;;-webkit-text-stroke:0.15px #1a1a1a">903</div>
<div class="t" style="left:24.40px;top:303.24px;font-size:10.7px;line-height:10.7px;color:#1a1a1a;font-weight:bold;-webkit-text-stroke:0.2px #1a1a1a;">Bananas</div>
<div class="t" style="right:664.80px;top:303.41px;font-size:10.5px;line-height:10.5px;color:#1a1a1a;;-webkit-text-stroke:0.15px #1a1a1a">1150</div>
<div class="t" style="right:609.30px;top:303.41px;font-size:10.5px;line-height:10.5px;color:#1a1a1a;;-webkit-text-stroke:0.15px #1a1a1a">1265</div>
<div class="t" style="right:554.00px;top:303.41px;font-size:10.5px;line-height:10.5px;color:#1a1a1a;;-webkit-text-stroke:0.15px #1a1a1a">1380</div>
<div class="t" style="right:498.60px;top:303.41px;font-size:10.5px;line-height:10.5px;color:#1a1a1a;;-webkit-text-stroke:0.15px #1a1a1a">1495</div>
<div class="t" style="right:443.30px;top:303.41px;font-size:10.5px;line-height:10.5px;color:#1a1a1a;;-webkit-text-stroke:0.15px #1a1a1a">1610</div>
<div class="t" style="right:388.00px;top:303.41px;font-size:10.5px;line-height:10.5px;color:#1a1a1a;;-webkit-text-stroke:0.15px #1a1a1a">1725</div>
<div class="t" style="right:332.60px;top:303.41px;font-size:10.5px;line-height:10.5px;color:#1a1a1a;;-webkit-text-stroke:0.15px #1a1a1a">1840</div>
<div class="t" style="right:277.30px;top:303.41px;font-size:10.5px;line-height:10.5px;color:#1a1a1a;;-webkit-text-stroke:0.15px #1a1a1a">1955</div>
<div class="t" style="right:222.00px;top:303.41px;font-size:10.5px;line-height:10.5px;color:#1a1a1a;;-webkit-text-stroke:0.15px #1a1a1a">2070</div>
<div class="t" style="right:166.60px;top:303.41px;font-size:10.5px;line-height:10.5px;color:#1a1a1a;;-webkit-text-stroke:0.15px #1a1a1a">2185</div>
<div class="t" style="right:111.30px;top:303.41px;font-size:10.5px;line-height:10.5px;color:#1a1a1a;;-webkit-text-stroke:0.15px #1a1a1a">2300</div>
<div class="t" style="right:56.00px;top:303.41px;font-size:10.5px;line-height:10.5px;color:#1a1a1a;;-webkit-text-stroke:0.15px #1a1a1a">2415</div>
<div class="t" style="left:24.40px;top:320.44px;font-size:10.7px;line-height:10.7px;color:#1a1a1a;font-weight:bold;-webkit-text-stroke:0.2px #1a1a1a;">Grapes</div>
<div class="t" style="right:664.80px;top:320.61px;font-size:10.5px;line-height:10.5px;color:#1a1a1a;;-webkit-text-stroke:0.15px #1a1a1a">1175</div>
<div class="t" style="right:609.30px;top:320.61px;font-size:10.5px;line-height:10.5px;color:#1a1a1a;;-webkit-text-stroke:0.15px #1a1a1a">1220</div>
<div class="t" style="right:554.00px;top:320.61px;font-size:10.5px;line-height:10.5px;color:#1a1a1a;;-webkit-text-stroke:0.15px #1a1a1a">1265</div>
<div class="t" style="right:498.60px;top:320.61px;font-size:10.5px;line-height:10.5px;color:#1a1a1a;;-webkit-text-stroke:0.15px #1a1a1a">1310</div>
<div class="t" style="right:443.30px;top:320.61px;font-size:10.5px;line-height:10.5px;color:#1a1a1a;;-webkit-text-stroke:0.15px #1a1a1a">1355</div>
<div class="t" style="right:388.00px;top:320.61px;font-size:10.5px;line-height:10.5px;color:#1a1a1a;;-webkit-text-stroke:0.15px #1a1a1a">1400</div>
<div class="t" style="right:332.60px;top:320.61px;font-size:10.5px;line-height:10.5px;color:#1a1a1a;;-webkit-text-stroke:0.15px #1a1a1a">1445</div>
<div class="t" style="right:277.30px;top:320.61px;font-size:10.5px;line-height:10.5px;color:#1a1a1a;;-webkit-text-stroke:0.15px #1a1a1a">1490</div>
<div class="t" style="right:222.00px;top:320.61px;font-size:10.5px;line-height:10.5px;color:#1a1a1a;;-webkit-text-stroke:0.15px #1a1a1a">1535</div>
<div class="t" style="right:166.60px;top:320.61px;font-size:10.5px;line-height:10.5px;color:#1a1a1a;;-webkit-text-stroke:0.15px #1a1a1a">1580</div>
<div class="t" style="right:111.30px;top:320.61px;font-size:10.5px;line-height:10.5px;color:#1a1a1a;;-webkit-text-stroke:0.15px #1a1a1a">1625</div>
<div class="t" style="right:56.00px;top:320.61px;font-size:10.5px;line-height:10.5px;color:#1a1a1a;;-webkit-text-stroke:0.15px #1a1a1a">1670</div>
<div class="t" style="left:24.40px;top:338.04px;font-size:10.7px;line-height:10.7px;color:#1a1a1a;font-weight:bold;-webkit-text-stroke:0.2px #1a1a1a;">Total</div>
<div class="t" style="right:664.80px;top:338.21px;font-size:10.5px;line-height:10.5px;color:#1a1a1a;;-webkit-text-stroke:0.15px #1a1a1a">4525</div>
<div class="t" style="right:609.30px;top:338.21px;font-size:10.5px;line-height:10.5px;color:#1a1a1a;;-webkit-text-stroke:0.15px #1a1a1a">5179</div>
<div class="t" style="right:554.00px;top:338.21px;font-size:10.5px;line-height:10.5px;color:#1a1a1a;;-webkit-text-stroke:0.15px #1a1a1a">5833</div>
<div class="t" style="right:498.60px;top:338.21px;font-size:10.5px;line-height:10.5px;color:#1a1a1a;;-webkit-text-stroke:0.15px #1a1a1a">6487</div>
<div class="t" style="right:443.30px;top:338.21px;font-size:10.5px;line-height:10.5px;color:#1a1a1a;;-webkit-text-stroke:0.15px #1a1a1a">7141</div>
<div class="t" style="right:388.00px;top:338.21px;font-size:10.5px;line-height:10.5px;color:#1a1a1a;;-webkit-text-stroke:0.15px #1a1a1a">7795</div>
<div class="t" style="right:332.60px;top:338.21px;font-size:10.5px;line-height:10.5px;color:#1a1a1a;;-webkit-text-stroke:0.15px #1a1a1a">8449</div>
<div class="t" style="right:277.30px;top:338.21px;font-size:10.5px;line-height:10.5px;color:#1a1a1a;;-webkit-text-stroke:0.15px #1a1a1a">9103</div>
<div class="t" style="right:222.00px;top:338.21px;font-size:10.5px;line-height:10.5px;color:#1a1a1a;;-webkit-text-stroke:0.15px #1a1a1a">9757</div>
<div class="t" style="right:166.60px;top:338.21px;font-size:10.5px;line-height:10.5px;color:#1a1a1a;;-webkit-text-stroke:0.15px #1a1a1a">10411</div>
<div class="t" style="right:111.30px;top:338.21px;font-size:10.5px;line-height:10.5px;color:#1a1a1a;;-webkit-text-stroke:0.15px #1a1a1a">11065</div>
<div class="t" style="right:56.00px;top:338.21px;font-size:10.5px;line-height:10.5px;color:#1a1a1a;;-webkit-text-stroke:0.15px #1a1a1a">11719</div>
<div class="t" style="right:728.30px;top:253.36px;font-size:10.8px;line-height:10.8px;color:#1a1a1a;font-weight:bold;transform-origin:100% 9.14px;transform:rotate(45deg);-webkit-text-stroke:0.25px #1a1a1a">Products</div>
<div class="t" style="right:674.70px;top:253.27px;font-size:10.9px;line-height:10.9px;color:#1a1a1a;font-weight:bold;transform-origin:100% 9.23px;transform:rotate(45deg);-webkit-text-stroke:0.25px #1a1a1a">Jan</div>
<div class="t" style="right:619.20px;top:253.27px;font-size:10.9px;line-height:10.9px;color:#1a1a1a;font-weight:bold;transform-origin:100% 9.23px;transform:rotate(45deg);-webkit-text-stroke:0.25px #1a1a1a">Feb</div>
<div class="t" style="right:563.90px;top:253.27px;font-size:10.9px;line-height:10.9px;color:#1a1a1a;font-weight:bold;transform-origin:100% 9.23px;transform:rotate(45deg);-webkit-text-stroke:0.25px #1a1a1a">Mar</div>
<div class="t" style="right:508.50px;top:253.27px;font-size:10.9px;line-height:10.9px;color:#1a1a1a;font-weight:bold;transform-origin:100% 9.23px;transform:rotate(45deg);-webkit-text-stroke:0.25px #1a1a1a">Apr</div>
<div class="t" style="right:453.20px;top:253.27px;font-size:10.9px;line-height:10.9px;color:#1a1a1a;font-weight:bold;transform-origin:100% 9.23px;transform:rotate(45deg);-webkit-text-stroke:0.25px #1a1a1a">May</div>
<div class="t" style="right:397.90px;top:253.27px;font-size:10.9px;line-height:10.9px;color:#1a1a1a;font-weight:bold;transform-origin:100% 9.23px;transform:rotate(45deg);-webkit-text-stroke:0.25px #1a1a1a">Jun</div>
<div class="t" style="right:342.50px;top:253.27px;font-size:10.9px;line-height:10.9px;color:#1a1a1a;font-weight:bold;transform-origin:100% 9.23px;transform:rotate(45deg);-webkit-text-stroke:0.25px #1a1a1a">Jul</div>
<div class="t" style="right:287.20px;top:253.27px;font-size:10.9px;line-height:10.9px;color:#1a1a1a;font-weight:bold;transform-origin:100% 9.23px;transform:rotate(45deg);-webkit-text-stroke:0.25px #1a1a1a">Aug</div>
<div class="t" style="right:231.90px;top:253.27px;font-size:10.9px;line-height:10.9px;color:#1a1a1a;font-weight:bold;transform-origin:100% 9.23px;transform:rotate(45deg);-webkit-text-stroke:0.25px #1a1a1a">Sep</div>
<div class="t" style="right:176.50px;top:253.27px;font-size:10.9px;line-height:10.9px;color:#1a1a1a;font-weight:bold;transform-origin:100% 9.23px;transform:rotate(45deg);-webkit-text-stroke:0.25px #1a1a1a">Oct</div>
<div class="t" style="right:121.20px;top:253.27px;font-size:10.9px;line-height:10.9px;color:#1a1a1a;font-weight:bold;transform-origin:100% 9.23px;transform:rotate(45deg);-webkit-text-stroke:0.25px #1a1a1a">Nov</div>
<div class="t" style="right:65.90px;top:253.27px;font-size:10.9px;line-height:10.9px;color:#1a1a1a;font-weight:bold;transform-origin:100% 9.23px;transform:rotate(45deg);-webkit-text-stroke:0.25px #1a1a1a">Dec</div>
<div class="r" style="left:22.5px;top:333.2px;width:723.8px;height:1.2px;background:#1a1a1a;"></div>
<div class="r" style="left:22.5px;top:349.7px;width:723.8px;height:1.2px;background:#1a1a1a;"></div>
<div class="r" style="left:22.5px;top:352.1px;width:723.8px;height:1.2px;background:#1a1a1a;"></div>
<div class="r" style="left:81px;top:263px;width:297.9px;height:2px;background:#217346;"></div>
<div class="r" style="left:81px;top:281px;width:295px;height:2px;background:#217346;"></div>
<div class="r" style="left:81px;top:263px;width:2px;height:20px;background:#217346;"></div>
<div class="r" style="left:377px;top:263px;width:2px;height:17px;background:#217346;"></div>
<div class="r" style="left:376.2px;top:279.8px;width:4px;height:4px;background:#217346;outline:1px solid #fff;"></div>
<svg class="r" style="left:458px;top:285.5px" width="14" height="14" viewBox="0 0 14 14">
<path d="M3.5 0.5 H9.5 V4.8 H13.3 V10.2 H9.5 V13.3 H3.5 V10.2 H0.5 V4.8 H3.5 Z" fill="#fff" stroke="#000" stroke-width="1.2"/>
</svg>
</body></html>
